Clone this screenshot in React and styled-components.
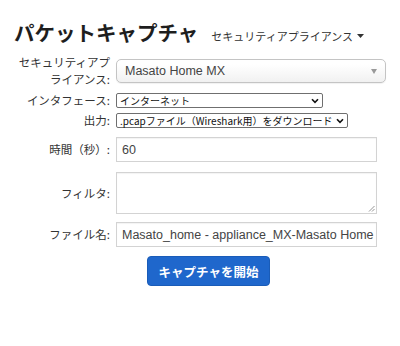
import React from "react";
import styled, { createGlobalStyle } from "styled-components";

const GlobalStyle = createGlobalStyle`
  html, body {
    margin: 0;
    padding: 0;
    background: #fff;
  }
  body {
    font-family: "Liberation Sans", "Noto Sans CJK JP", sans-serif;
    color: #333;
  }
`;

const JP = `"Noto Sans CJK JP", "Liberation Sans", sans-serif`;
const LATIN = `"Liberation Sans", "Noto Sans CJK JP", sans-serif`;

const Page = styled.div`
  width: 400px;
  height: 346px;
  padding: 19px 14px 0 14px;
  box-sizing: border-box;
  overflow: hidden;
`;

const Header = styled.div`
  display: flex;
  align-items: baseline;
  gap: 13px;
  margin-bottom: 9px;
`;

const Title = styled.h1`
  margin: 0;
  font-family: ${JP};
  font-size: 20.5px;
  font-weight: 700;
  line-height: 26px;
  color: #1e1e1e;
`;

const ApplianceMenu = styled.div`
  display: flex;
  align-items: center;
  gap: 4px;
  font-family: ${JP};
  font-size: 11px;
  color: #333;
`;

const Row = styled.div`
  display: grid;
  grid-template-columns: 96px 1fr;
  column-gap: 6px;
  align-items: center;
  margin-bottom: ${(p) => p.$mb || 0}px;
`;

const Label = styled.label`
  text-align: right;
  font-family: ${JP};
  font-size: 11.5px;
  line-height: 17px;
  color: #333;
`;

const ChosenSelect = styled.div`
  width: 270px;
  height: 24px;
  box-sizing: border-box;
  display: flex;
  align-items: center;
  justify-content: space-between;
  padding: 0 8px 0 8px;
  border: 1px solid #c4c4c4;
  border-radius: 5px;
  background: linear-gradient(#ffffff 20%, #f1f1f1 100%);
  box-shadow: 0 1px 1px rgba(0, 0, 0, 0.06);
  font-family: ${LATIN};
  font-size: 12.5px;
  color: #444;
`;

const TinyCaret = styled.span`
  width: 0;
  height: 0;
  border-left: 3px solid transparent;
  border-right: 3px solid transparent;
  border-top: 5px solid #999;
`;

const NativeSelect = styled.div`
  width: ${(p) => (p.$width ? `${p.$width}px` : "auto")};
  align-self: center;
  justify-self: start;
  height: 15px;
  box-sizing: border-box;
  display: flex;
  align-items: center;
  justify-content: space-between;
  gap: 4px;
  padding: 0 3px 0 3px;
  border: 1px solid #6f6f6f;
  border-radius: 2px;
  background: #fff;
  font-family: ${JP};
  font-size: 10px;
  line-height: 13px;
  color: #111;
  white-space: nowrap;
`;

const TextInput = styled.div`
  width: 261px;
  height: ${(p) => p.$height || 25}px;
  box-sizing: border-box;
  position: relative;
  padding: 0 5px;
  display: flex;
  align-items: center;
  border: 1px solid #d3d3d3;
  box-shadow: inset 0 1px 1px rgba(0, 0, 0, 0.05);
  background: #fff;
  font-family: ${LATIN};
  font-size: 12.5px;
  color: #444;
  white-space: nowrap;
  overflow: hidden;
`;

const Grip = styled.svg`
  position: absolute;
  right: 1px;
  bottom: 1px;
`;

const StartButton = styled.button`
  justify-self: start;
  margin-left: 31px;
  width: 123px;
  height: 30px;
  border: 1px solid #1a5cb8;
  border-radius: 4px;
  background: #1f67cc;
  color: #fff;
  font-family: ${JP};
  font-size: 12.5px;
  font-weight: 700;
  padding: 0;
  cursor: pointer;
`;

const Chevron = () => (
  <svg width="8" height="6" viewBox="0 0 8 6">
    <path d="M1 1.2 L4 4.4 L7 1.2" fill="none" stroke="#111" strokeWidth="1.6" />
  </svg>
);

const DropCaret = () => (
  <svg width="7" height="4" viewBox="0 0 7 4">
    <path d="M0 0 H7 L3.5 4 Z" fill="#333" />
  </svg>
);

export default function App() {
  return (
    <>
      <GlobalStyle />
      <Page>
        <Header>
          <Title>パケットキャプチャ</Title>
          <ApplianceMenu>
            セキュリティアプライアンス
            <DropCaret />
          </ApplianceMenu>
        </Header>

        <Row $mb={4}>
          <Label>
            セキュリティアプ
            <br />
            ライアンス:
          </Label>
          <ChosenSelect>
            Masato Home MX
            <TinyCaret />
          </ChosenSelect>
        </Row>

        <Row $mb={3}>
          <Label>インタフェース:</Label>
          <NativeSelect $width={207}>
            インターネット
            <Chevron />
          </NativeSelect>
        </Row>

        <Row $mb={8}>
          <Label>出力:</Label>
          <NativeSelect>
            .pcapファイル（Wireshark用）をダウンロード
            <Chevron />
          </NativeSelect>
        </Row>

        <Row $mb={10}>
          <Label>時間（秒）:</Label>
          <TextInput>60</TextInput>
        </Row>

        <Row $mb={8}>
          <Label>フィルタ:</Label>
          <TextInput $height={42}>
            <Grip width="7" height="7" viewBox="0 0 7 7">
              <path d="M6.5 1 L1 6.5 M6.5 4 L4 6.5" stroke="#888" strokeWidth="0.9" />
            </Grip>
          </TextInput>
        </Row>

        <Row $mb={9}>
          <Label>ファイル名:</Label>
          <TextInput>Masato_home - appliance_MX-Masato Home MX</TextInput>
        </Row>

        <Row>
          <span />
          <StartButton>キャプチャを開始</StartButton>
        </Row>
      </Page>
    </>
  );
}
